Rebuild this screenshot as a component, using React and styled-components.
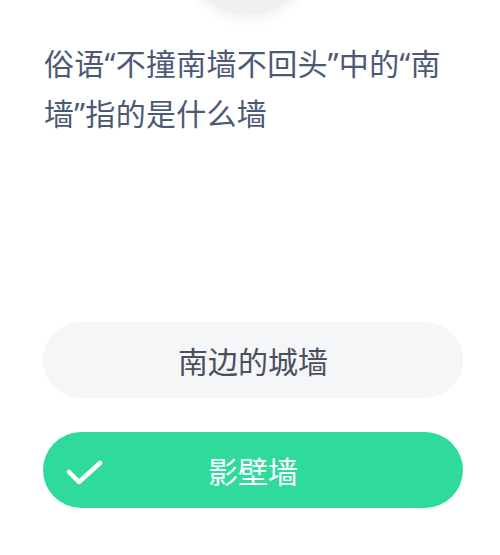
import React from "react";
import styled, { createGlobalStyle } from "styled-components";

const GlobalStyle = createGlobalStyle`
  html, body {
    margin: 0;
    padding: 0;
    background: #ffffff;
    font-family: "Noto Sans", "Noto Sans CJK SC", sans-serif;
  }
`;

const Page = styled.div`
  width: 500px;
  height: 555px;
  overflow: hidden;
  box-sizing: border-box;
  padding: 0 37px 0 43px;
  display: flex;
  flex-direction: column;
  background: #ffffff;
`;

const Avatar = styled.div`
  width: 130px;
  height: 130px;
  border-radius: 50%;
  margin: -115px 0 0 140px;
  flex-shrink: 0;
  background: radial-gradient(circle at 50% 40%, #e6e6e6 0%, #ededed 55%, #f4f4f4 100%);
  box-shadow: 0 4px 14px rgba(0, 0, 0, 0.06);
`;

// quotes come from Noto Sans (narrow), the ideographs fall through to the CJK face
const Question = styled.p`
  margin: 24px 0 0 1px;
  width: 420px;
  font-family: "Noto Sans", "Noto Sans CJK SC", sans-serif;
  font-size: 30px;
  letter-spacing: 0.3px;
  line-height: 50px;
  color: #4c5976;
`;

const Options = styled.div`
  margin-top: 183px;
  display: flex;
  flex-direction: column;
  gap: 34px;
`;

const Option = styled.div`
  position: relative;
  height: 76px;
  border-radius: 38px;
  display: flex;
  align-items: center;
  justify-content: center;
  font-family: "Noto Sans CJK SC", sans-serif;
  font-size: 30px;
  background: ${(p) => (p.$correct ? "#2fdb9b" : "#f5f6f8")};
  color: ${(p) => (p.$correct ? "#ffffff" : "#4a505c")};
`;

const Mark = styled.svg`
  position: absolute;
  left: 23px;
  top: 28px;
`;

const CheckMark = () => (
  <Mark width="37" height="25" viewBox="0 0 37 25">
    <polyline
      points="3,12 13,22 34,3"
      fill="none"
      stroke="#ffffff"
      strokeWidth="4.5"
      strokeLinecap="round"
      strokeLinejoin="round"
    />
  </Mark>
);

const options = [
  { text: "南边的城墙", correct: false },
  { text: "影壁墙", correct: true },
];

export default function App() {
  return (
    <>
      <GlobalStyle />
      <Page>
        <Avatar />
        <Question>俗语“不撞南墙不回头”中的“南墙”指的是什么墙</Question>
        <Options>
          {options.map((o) => (
            <Option key={o.text} $correct={o.correct}>
              {o.correct && <CheckMark />}
              {o.text}
            </Option>
          ))}
        </Options>
      </Page>
    </>
  );
}
